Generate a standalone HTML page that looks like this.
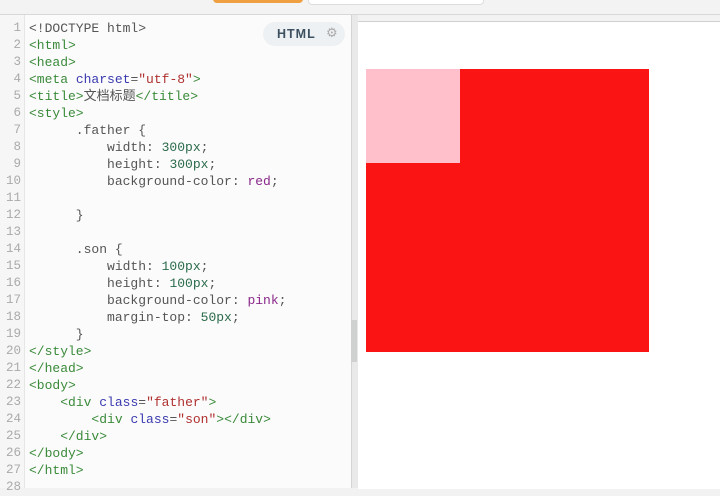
<!DOCTYPE html>
<html><head><meta charset="utf-8"><style>
body{margin:0;width:720px;height:488px;overflow:hidden;background:#f2f2f2;position:relative;font-family:"Liberation Mono","Noto Sans CJK SC",monospace;}
.top{position:absolute;left:0;top:0;width:720px;height:14px;background:#f3f3f3;border-bottom:1px solid #d8d8d8;}
.ob{position:absolute;left:213px;top:-6px;width:90px;height:9px;background:#f0a040;border-radius:4px;}
.wb{position:absolute;left:308px;top:-6px;width:174px;height:9px;background:#fff;border:1px solid #ddd;border-radius:4px;}
.ed{position:absolute;left:0;top:15px;width:351px;height:473px;background:#fbfbfb;border-right:1px solid #d4d4d4;}
.gut{position:absolute;left:0;top:0;width:24px;height:473px;background:#f6f6f6;border-right:1px solid #e6e6e6;}
.ln{position:absolute;left:0;width:21px;text-align:right;color:#aaa;font-size:12.5px;line-height:17px;height:17px;}
.cd{position:absolute;left:29px;white-space:pre;font-size:13px;color:#555;line-height:17px;height:17px;overflow:visible;}
.cd .cj{font-size:13px;line-height:17px;vertical-align:top;}
.t{color:#3a8a3a}.a{color:#3a3ab0}.s{color:#b03030}.n{color:#2a6a4a}.k{color:#8a2a8a}
.badge{position:absolute;left:263px;top:22px;width:82px;height:24px;background:#eef1f3;border-radius:12px;}
.badge b{position:absolute;left:14px;top:5px;font-family:"Liberation Sans",sans-serif;font-size:12.5px;color:#3c5060;letter-spacing:1px;}
.badge i{position:absolute;left:63px;top:4px;font-style:normal;color:#aaa;font-size:13px;font-family:"DejaVu Sans",sans-serif;}
.spl{position:absolute;left:352px;top:15px;width:6px;height:473px;background:#e9e9e9;}
.thumb{position:absolute;left:351px;top:320px;width:6px;height:42px;background:#cfd1d1;}
.pv{position:absolute;left:358px;top:21px;width:362px;height:467px;background:#fff;border-top:1px solid #d0d0d0;}
.red{position:absolute;left:366px;top:69px;width:283px;height:283px;background:#fa1414;}
.pink{position:absolute;left:366px;top:69px;width:94px;height:94px;background:#ffc0cb;}
</style></head><body>
<div class="top"><div class="ob"></div><div class="wb"></div></div>
<div class="ed"><div class="gut"></div></div>
<div class="badge"><b>HTML</b><i>⚙</i></div>
<div class="spl"></div><div class="thumb"></div>
<div class="pv"></div>
<div class="red"></div><div class="pink"></div>
<div class="ln" style="top:20px">1</div><div class="cd" style="top:20px">&lt;!DOCTYPE html&gt;</div>
<div class="ln" style="top:37px">2</div><div class="cd t" style="top:37px">&lt;html&gt;</div>
<div class="ln" style="top:54px">3</div><div class="cd t" style="top:54px">&lt;head&gt;</div>
<div class="ln" style="top:71px">4</div><div class="cd" style="top:71px"><span class="t">&lt;meta</span> <span class="a">charset</span>=<span class="s">"utf-8"</span><span class="t">&gt;</span></div>
<div class="ln" style="top:88px">5</div><div class="cd" style="top:88px"><span class="t">&lt;title&gt;</span><span class="cj">文档标题</span><span class="t">&lt;/title&gt;</span></div>
<div class="ln" style="top:105px">6</div><div class="cd t" style="top:105px">&lt;style&gt;</div>
<div class="ln" style="top:122px">7</div><div class="cd" style="top:122px">      .father {</div>
<div class="ln" style="top:139px">8</div><div class="cd" style="top:139px">          width: <span class="n">300px</span>;</div>
<div class="ln" style="top:156px">9</div><div class="cd" style="top:156px">          height: <span class="n">300px</span>;</div>
<div class="ln" style="top:173px">10</div><div class="cd" style="top:173px">          background-color: <span class="k">red</span>;</div>
<div class="ln" style="top:190px">11</div>
<div class="ln" style="top:207px">12</div><div class="cd" style="top:207px">      }</div>
<div class="ln" style="top:224px">13</div>
<div class="ln" style="top:241px">14</div><div class="cd" style="top:241px">      .son {</div>
<div class="ln" style="top:258px">15</div><div class="cd" style="top:258px">          width: <span class="n">100px</span>;</div>
<div class="ln" style="top:275px">16</div><div class="cd" style="top:275px">          height: <span class="n">100px</span>;</div>
<div class="ln" style="top:292px">17</div><div class="cd" style="top:292px">          background-color: <span class="k">pink</span>;</div>
<div class="ln" style="top:309px">18</div><div class="cd" style="top:309px">          margin-top: <span class="n">50px</span>;</div>
<div class="ln" style="top:326px">19</div><div class="cd" style="top:326px">      }</div>
<div class="ln" style="top:343px">20</div><div class="cd t" style="top:343px">&lt;/style&gt;</div>
<div class="ln" style="top:360px">21</div><div class="cd t" style="top:360px">&lt;/head&gt;</div>
<div class="ln" style="top:377px">22</div><div class="cd t" style="top:377px">&lt;body&gt;</div>
<div class="ln" style="top:394px">23</div><div class="cd" style="top:394px">    <span class="t">&lt;div</span> <span class="a">class</span>=<span class="s">"father"</span><span class="t">&gt;</span></div>
<div class="ln" style="top:411px">24</div><div class="cd" style="top:411px">        <span class="t">&lt;div</span> <span class="a">class</span>=<span class="s">"son"</span><span class="t">&gt;&lt;/div&gt;</span></div>
<div class="ln" style="top:428px">25</div><div class="cd t" style="top:428px">    &lt;/div&gt;</div>
<div class="ln" style="top:445px">26</div><div class="cd t" style="top:445px">&lt;/body&gt;</div>
<div class="ln" style="top:462px">27</div><div class="cd t" style="top:462px">&lt;/html&gt;</div>
<div class="ln" style="top:479px">28</div>
</body></html>
